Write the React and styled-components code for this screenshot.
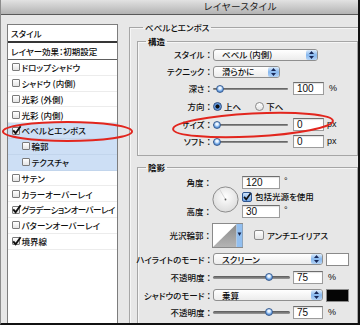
import React from 'react';
import styled, { createGlobalStyle } from 'styled-components';

const GlobalStyle = createGlobalStyle`
  html, body {
    margin: 0;
    padding: 0;
    background: #e7e7e7;
  }
  body {
    font-family: "Noto Sans CJK JP", "Noto Sans", sans-serif;
    overflow: hidden;
  }
`;

// window frame
const Dialog = styled.div`
  position: relative;
  width: 360px;
  height: 325px;
  box-sizing: border-box;
  background: #e7e7e7;
  border-left: 1px solid #8c8c8c;
  border-right: 2px solid #111;
  border-bottom: 2px solid #111;
  overflow: hidden;
  display: flex;
  flex-direction: column;
  font-size: 8.5px;
  font-weight: 500;
  line-height: 1;
  color: #0e0e0e;
  font-feature-settings: "palt";
`;

const TitleBar = styled.div`
  flex: none;
  height: 14px;
  background: linear-gradient(#e2e2e2, #b3b3b3);
  border-bottom: 1px solid #595959;
  display: flex;
  align-items: center;
  justify-content: center;
  padding-left: 122px;
  font-size: 9.5px;
  font-weight: 400;
  letter-spacing: 0.6px;
  color: #1c1c1c;
`;

const Body = styled.div`
  flex: 1;
  min-height: 0;
  display: flex;
`;

// left: effect list
const Sidebar = styled.div`
  flex: none;
  width: 111px;
  box-sizing: border-box;
  margin: 9px 0 0 6px;
  background: #fff;
  border: 1px solid #7d7d7d;
  border-bottom: none;
  overflow: hidden;
`;

const SideHeader = styled.div`
  height: ${p => p.$h}px;
  box-sizing: border-box;
  display: flex;
  align-items: center;
  padding-left: 3px;
  border-bottom: ${p => p.$line};
  white-space: nowrap;
`;

const SideRow = styled.div`
  height: 15.8px;
  box-sizing: border-box;
  display: flex;
  align-items: center;
  gap: 1.5px;
  padding-left: ${p => (p.$sub ? 14 : 4)}px;
  background: ${p => (p.$selected ? '#cddff5' : '#fff')};
  border-bottom: 1px solid ${p => (p.$selected ? '#c2d5ec' : '#ececec')};
  white-space: nowrap;
  letter-spacing: ${p => (p.$tight ? '-0.55px' : 'normal')};
`;

const Box = styled.span`
  position: relative;
  flex: none;
  width: 8px;
  height: 8px;
  box-sizing: border-box;
  border: 1px solid #7b7b7b;
  border-radius: 1px;
  background: linear-gradient(#ffffff, #e4e4e4);
  display: flex;
  align-items: center;
  justify-content: center;
`;

const Tick = ({ size = 9 }) => (
  <svg width={size} height={size} viewBox="0 0 9 9" style={{ overflow: 'visible' }}>
    <path d="M1.2 4.4 L3.6 7.2 L8.6 0.2" stroke="#111" strokeWidth="1.9" fill="none" />
  </svg>
);

// right: settings
const RightPane = styled.div`
  flex: none;
  width: 229px;
  margin-left: 11px;
  padding-top: 7px;
`;

const Group = styled.fieldset`
  margin: ${p => p.$top || 0}px 0 0 0;
  padding: 0 0 ${p => p.$bottom || 0}px ${p => p.$pad || 0}px;
  min-width: 0;
  width: ${p => p.$w}px;
  box-sizing: border-box;
  border: 1px solid #a6a6a6;
  box-shadow: inset 1px 1px 0 #f6f6f6;
`;

const Legend = styled.legend`
  margin-left: ${p => p.$offset}px;
  padding: 0 2px;
  font-size: 8.5px;
  line-height: 10px;
  font-weight: ${p => (p.$bold ? 700 : 500)};
`;

const Row = styled.div`
  height: ${p => p.$h}px;
  display: flex;
  align-items: center;
`;

// right-aligned caption, colon kept full width
const Label = styled.div`
  flex: none;
  width: ${p => p.$w || 75}px;
  grid-column: 1;
  grid-row: ${p => p.$row || 'auto'};
  display: flex;
  justify-content: flex-end;
  white-space: nowrap;
  &::after {
    content: '：';
    font-feature-settings: normal;
  }
`;

const Popup = styled.div`
  flex: none;
  width: ${p => p.$w}px;
  height: 12px;
  box-sizing: border-box;
  border: 1px solid #8f8f8f;
  border-radius: 3px;
  background: linear-gradient(#ffffff, #ececec);
  display: flex;
  align-items: center;
  padding-left: 8px;
  white-space: nowrap;
`;

const PopupArrows = styled.span`
  margin-left: auto;
  width: 11px;
  height: 10px;
  border-radius: 2px;
  background: linear-gradient(#dcecfc, #86b7ee 50%, #b3d3f6);
  display: flex;
  align-items: center;
  justify-content: center;
`;

const Track = styled.div`
  position: relative;
  flex: none;
  width: ${p => p.$w}px;
  height: 8px;
  &::before {
    content: '';
    position: absolute;
    left: 0;
    right: 0;
    top: 3px;
    height: 2.5px;
    border-radius: 2px;
    background: linear-gradient(#575757, #9c9c9c);
  }
`;

const Knob = styled.span`
  position: absolute;
  top: 0;
  width: 8px;
  height: 8px;
  box-sizing: border-box;
  border-radius: 50%;
  border: 1px solid #3b5f93;
  background: radial-gradient(circle at 50% 35%, #eef6ff 0 22%, #76abe8 58%, #2f63b0 100%);
`;

const Field = styled.div`
  flex: none;
  width: ${p => p.$w}px;
  height: 13px;
  margin-left: ${p => p.$gap || 0}px;
  box-sizing: border-box;
  border: 1px solid #9c9c9c;
  border-top-color: #6e6e6e;
  background: #fff;
  box-shadow: inset 0 1px 1px rgba(0, 0, 0, 0.12);
  padding-left: 3px;
  font-family: "Liberation Sans", Arial, sans-serif;
  font-weight: 400;
  font-size: 10px;
  line-height: 11px;
`;

const Unit = styled.span`
  margin-left: ${p => p.$gap || 5}px;
  align-self: ${p => (p.$top ? 'flex-start' : 'center')};
  margin-top: ${p => (p.$top ? 1 : 0)}px;
  font-family: "Liberation Sans", Arial, sans-serif;
  font-weight: 400;
  font-size: 9px;
`;

const Radio = styled.span`
  flex: none;
  width: 9px;
  height: 9px;
  box-sizing: border-box;
  border-radius: 50%;
  border: 1px solid ${p => (p.$on ? '#284a80' : '#8a8a8a')};
  background: ${p =>
    p.$on
      ? 'radial-gradient(circle, #0e0e0e 0 1.7px, #4f87d2 2.3px, #a8ccf4 100%)'
      : 'linear-gradient(#ffffff, #e2e2e2)'};
`;

const Choice = styled.span`
  display: flex;
  align-items: center;
  gap: 2px;
  margin-right: ${p => p.$space || 0}px;
`;

const AquaBox = styled.span`
  flex: none;
  width: 10px;
  height: 10px;
  box-sizing: border-box;
  border: 1px solid ${p => (p.$on ? '#2d548e' : '#8a8a8a')};
  border-radius: 2px;
  background: ${p => (p.$on ? 'linear-gradient(#cfe4fb, #6ea4e6)' : 'linear-gradient(#ffffff, #e4e4e4)')};
  display: flex;
  align-items: center;
  justify-content: center;
  margin-left: ${p => p.$gap || 0}px;
  margin-right: 3px;
`;

const AngleBlock = styled.div`
  margin-top: 3px;
  display: grid;
  grid-template-columns: 74px 30px auto;
  grid-template-rows: 14px 15px 14px;
  align-items: center;
`;

const DialSpot = styled.div`
  grid-column: 2;
  grid-row: 1 / 4;
  align-self: end;
  margin-bottom: 5px;
  display: flex;
`;

const Cell = styled.div`
  grid-column: 3;
  grid-row: ${p => p.$row};
  display: flex;
  align-items: center;
  white-space: nowrap;
`;

const Swatch = styled.span`
  flex: none;
  width: 23px;
  height: 13px;
  margin-left: 3px;
  box-sizing: border-box;
  border: 1px solid #8a8a8a;
  background: ${p => p.$color};
`;

const Marks = styled.svg`
  position: absolute;
  left: 0;
  top: 0;
  pointer-events: none;
`;

const effects = [
  { name: 'ドロップシャドウ' },
  { name: 'シャドウ (内側)' },
  { name: '光彩 (外側)' },
  { name: '光彩 (内側)' },
  { name: 'ベベルとエンボス', checked: true, selected: true },
  { name: '輪郭', sub: true, selected: true },
  { name: 'テクスチャ', sub: true, selected: true },
  { name: 'サテン' },
  { name: 'カラーオーバーレイ' },
  { name: 'グラデーションオーバーレイ', checked: true, tight: true },
  { name: 'パターンオーバーレイ' },
  { name: '境界線', checked: true },
];

const Arrows = () => (
  <svg width="5" height="8" viewBox="0 0 5 8">
    <path d="M2.5 0 L5 3 H0 Z M2.5 8 L5 5 H0 Z" fill="#17295a" />
  </svg>
);

const Select = ({ width, value }) => (
  <Popup $w={width}>
    {value}
    <PopupArrows><Arrows /></PopupArrows>
  </Popup>
);

const Slider = ({ width, at }) => (
  <Track $w={width}>
    <Knob style={{ left: `${at * (width - 8)}px` }} />
  </Track>
);

const Dial = () => (
  <svg width="27" height="27" viewBox="0 0 27 27">
    <defs>
      <radialGradient id="dialFill" cx="50%" cy="40%" r="65%">
        <stop offset="0" stopColor="#ffffff" />
        <stop offset="1" stopColor="#d9d9d9" />
      </radialGradient>
    </defs>
    <circle cx="13.5" cy="13.5" r="12.6" fill="url(#dialFill)" stroke="#8c8c8c" />
    <line x1="13.5" y1="13.5" x2="7.6" y2="3.3" stroke="#cfcfcf" strokeWidth="0.8" />
    <circle cx="13.5" cy="13.5" r="0.9" fill="#5a5a5a" />
  </svg>
);

const ContourPreview = () => (
  <svg width="31" height="25" viewBox="0 0 31 25">
    <defs>
      <linearGradient id="contourFill" x1="0" y1="0" x2="0" y2="1">
        <stop offset="0" stopColor="#8a8a8a" />
        <stop offset="1" stopColor="#b4b4b4" />
      </linearGradient>
    </defs>
    <rect x="0.5" y="0.5" width="30" height="24" fill="#fff" stroke="#8a8a8a" />
    <polygon points="1,24 24.5,1 24.5,24" fill="url(#contourFill)" />
    <rect x="24.5" y="1" width="6" height="23" fill="#92bff0" />
    <polygon points="25.6,9.5 29.4,9.5 27.5,13" fill="#13224a" />
  </svg>
);

const Structure = () => (
  <Group $w={221} $top={4} $bottom={5}>
    <Legend $offset={8} $bold>構造</Legend>
    <Row $h={17}>
      <Label>スタイル</Label>
      <Select width={105} value="ベベル (内側)" />
    </Row>
    <Row $h={17}>
      <Label>テクニック</Label>
      <Select width={67} value="滑らかに" />
    </Row>
    <Row $h={17}>
      <Label>深さ</Label>
      <Slider width={75} at={0.05} />
      <Field $w={31} $gap={5}>100</Field>
      <Unit>%</Unit>
    </Row>
    <Row $h={19}>
      <Label>方向</Label>
      <Choice $space={14}><Radio $on />上へ</Choice>
      <Choice><Radio />下へ</Choice>
    </Row>
    <Row $h={17}>
      <Label>サイズ</Label>
      <Slider width={75} at={0} />
      <Field $w={31} $gap={5}>0</Field>
      <Unit $gap={3}>px</Unit>
    </Row>
    <Row $h={17}>
      <Label>ソフト</Label>
      <Slider width={75} at={0} />
      <Field $w={31} $gap={5}>0</Field>
      <Unit $gap={3}>px</Unit>
    </Row>
  </Group>
);

const Shading = () => (
  <Group $w={221} $top={6} $bottom={10}>
    <Legend $offset={8} $bold>陰影</Legend>
    <AngleBlock>
      <Label $w={74} $row={1}>角度</Label>
      <DialSpot><Dial /></DialSpot>
      <Cell $row={1}>
        <Field $w={38}>120</Field>
        <Unit $gap={4} $top>°</Unit>
      </Cell>
      <Cell $row={2}>
        <AquaBox $on><Tick size={8} /></AquaBox>
        包括光源を使用
      </Cell>
      <Label $w={74} $row={3}>高度</Label>
      <Cell $row={3}>
        <Field $w={38}>30</Field>
        <Unit $gap={4} $top>°</Unit>
      </Cell>
    </AngleBlock>
    <Row $h={30} style={{ marginTop: 2 }}>
      <Label $w={74}>光沢輪郭</Label>
      <ContourPreview />
      <AquaBox $gap={11} />
      アンチエイリアス
    </Row>
    <Row $h={18}>
      <Label>ハイライトのモード</Label>
      <Select width={110} value="スクリーン" />
      <Swatch $color="#ffffff" />
    </Row>
    <Row $h={18}>
      <Label>不透明度</Label>
      <Slider width={77} at={0.76} />
      <Field $w={30} $gap={3}>75</Field>
      <Unit>%</Unit>
    </Row>
    <Row $h={18}>
      <Label>シャドウのモード</Label>
      <Select width={110} value="乗算" />
      <Swatch $color="#050505" />
    </Row>
    <Row $h={16}>
      <Label>不透明度</Label>
      <Slider width={77} at={0.76} />
      <Field $w={30} $gap={3}>75</Field>
      <Unit>%</Unit>
    </Row>
  </Group>
);

const App = () => (
  <>
    <GlobalStyle />
    <Dialog>
      <TitleBar>レイヤースタイル</TitleBar>
      <Body>
        <Sidebar>
          <SideHeader $h={18} $line="2px solid #363636">スタイル</SideHeader>
          <SideHeader $h={17} $line="1px solid #5e5e5e">レイヤー効果：初期設定</SideHeader>
          {effects.map(fx => (
            <SideRow key={fx.name} $sub={fx.sub} $selected={fx.selected} $tight={fx.tight}>
              <Box>{fx.checked && <Tick />}</Box>
              {fx.name}
            </SideRow>
          ))}
        </Sidebar>
        <RightPane>
          <Group $w={240} $pad={7} $bottom={20}>
            <Legend $offset={6}>ベベルとエンボス</Legend>
            <Structure />
            <Shading />
          </Group>
        </RightPane>
      </Body>
      <Marks width="360" height="325" viewBox="0 0 360 325">
        <ellipse cx="66.5" cy="131.5" rx="64.5" ry="9.5" fill="none" stroke="#e2261e" strokeWidth="2" />
        <ellipse cx="252" cy="125" rx="80" ry="11.5" fill="none" stroke="#e2261e" strokeWidth="2" transform="rotate(-3 252 125)" />
      </Marks>
    </Dialog>
  </>
);

export default App;
